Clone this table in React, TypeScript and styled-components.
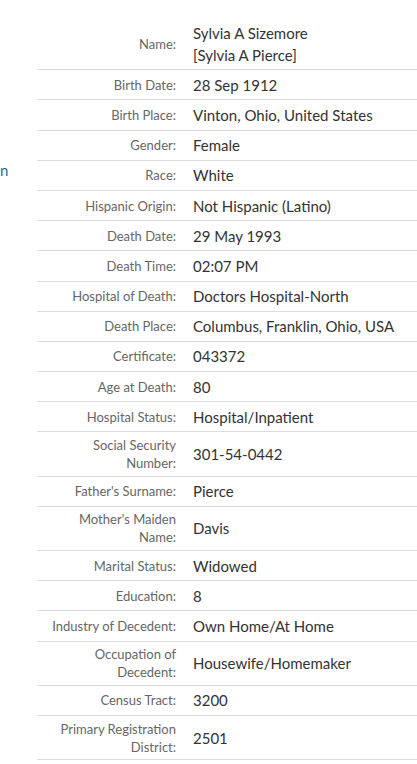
import styled, { createGlobalStyle } from 'styled-components';

const Global = createGlobalStyle`
  body {
    margin: 0;
    background: #fff;
    font-family: "Source Sans Pro", Lato, "Noto Sans", sans-serif;
  }
`;

const Page = styled.div`
  display: grid;
  grid-template-columns: 37px 1fr;
  padding-top: 18px;
`;

const Side = styled.div`
  padding-top: 141px;
`;

const SideLink = styled.a`
  display: block;
  color: #1f6f8b;
  font-size: 15px;
  line-height: 22px;
  text-decoration: none;
`;

const Table = styled.div`
  display: flex;
  flex-direction: column;
`;

const Row = styled.div`
  display: grid;
  grid-template-columns: 146px 1fr;
  align-items: center;
  border-bottom: 1px solid #dcdcdc;
  padding: 3.6px 0;
`;

const Label = styled.div`
  color: #666;
  font-size: 13px;
  line-height: 18px;
  text-align: right;
  padding: 0 7px 0 12px;
`;

const Value = styled.div`
  color: #333;
  font-size: 15px;
  line-height: 22px;
  padding-left: 10px;
`;

const rows: [string, string[]][] = [
  ['Name:', ['Sylvia A Sizemore', '[Sylvia A Pierce]']],
  ['Birth Date:', ['28 Sep 1912']],
  ['Birth Place:', ['Vinton, Ohio, United States']],
  ['Gender:', ['Female']],
  ['Race:', ['White']],
  ['Hispanic Origin:', ['Not Hispanic (Latino)']],
  ['Death Date:', ['29 May 1993']],
  ['Death Time:', ['02:07 PM']],
  ['Hospital of Death:', ['Doctors Hospital-North']],
  ['Death Place:', ['Columbus, Franklin, Ohio, USA']],
  ['Certificate:', ['043372']],
  ['Age at Death:', ['80']],
  ['Hospital Status:', ['Hospital/Inpatient']],
  ['Social Security Number:', ['301-54-0442']],
  ["Father's Surname:", ['Pierce']],
  ["Mother's Maiden Name:", ['Davis']],
  ['Marital Status:', ['Widowed']],
  ['Education:', ['8']],
  ['Industry of Decedent:', ['Own Home/At Home']],
  ['Occupation of Decedent:', ['Housewife/Homemaker']],
  ['Census Tract:', ['3200']],
  ['Primary Registration District:', ['2501']],
];

export default function App() {
  return (
    <>
      <Global />
      <Page>
        <Side>
          <SideLink href="#">n</SideLink>
        </Side>
        <Table>
          {rows.map(([label, values]) => (
            <Row key={label}>
              <Label>{label}</Label>
              <Value>
                {values.map(v => (
                  <div key={v}>{v}</div>
                ))}
              </Value>
            </Row>
          ))}
        </Table>
      </Page>
    </>
  );
}
